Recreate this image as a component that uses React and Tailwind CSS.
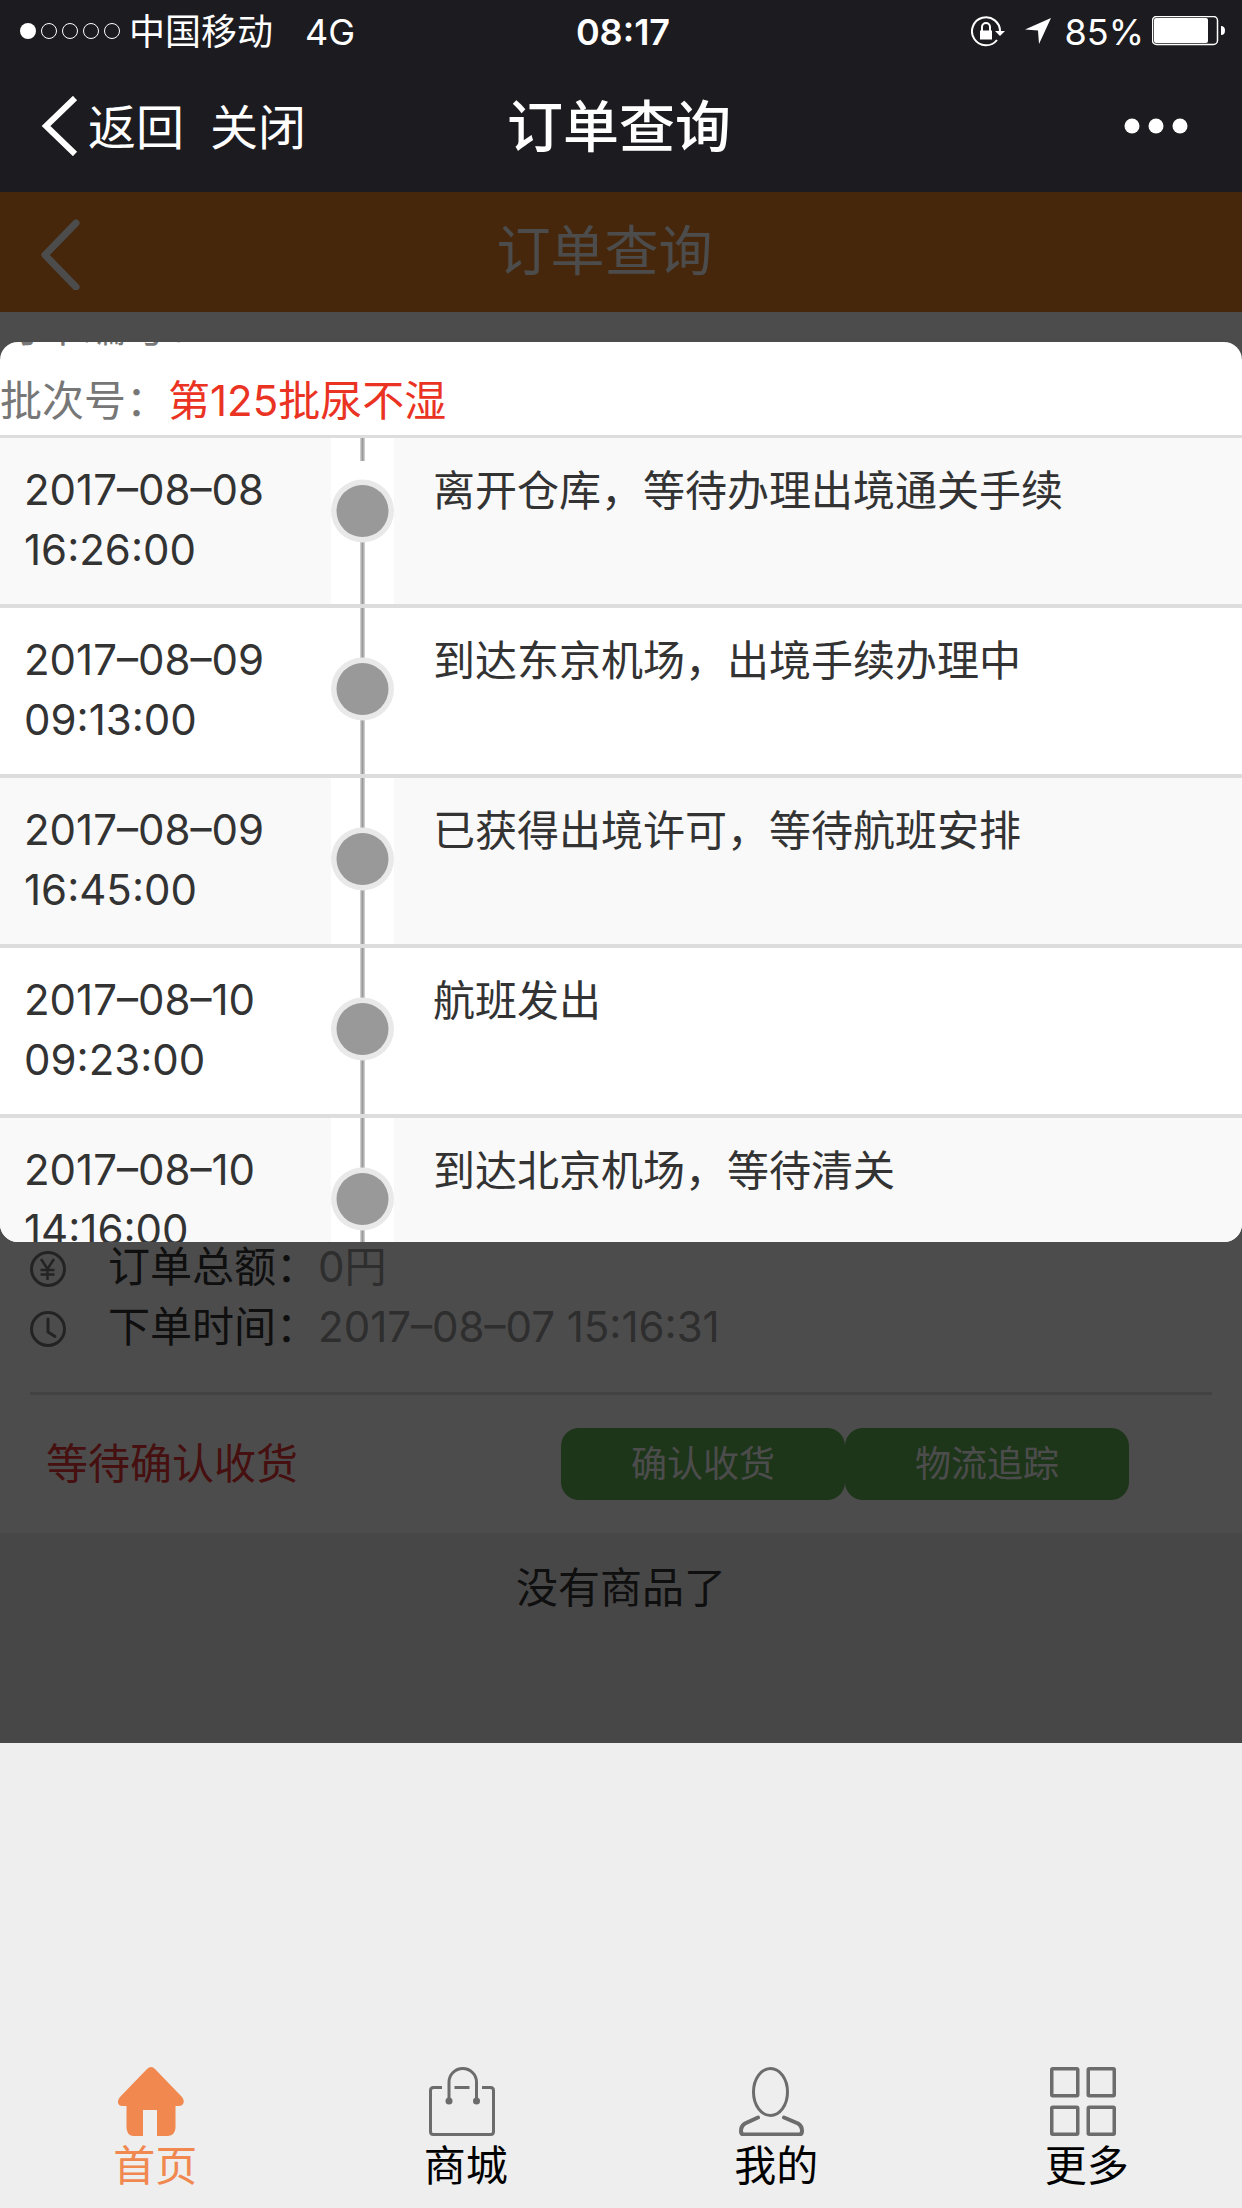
import React from 'react';

const FONT = "font-['Inter','Noto_Sans_CJK_SC',sans-serif]";

const records = [
  { date: '2017–08–08', time: '16:26:00', text: '离开仓库，等待办理出境通关手续' },
  { date: '2017–08–09', time: '09:13:00', text: '到达东京机场，出境手续办理中' },
  { date: '2017–08–09', time: '16:45:00', text: '已获得出境许可，等待航班安排' },
  { date: '2017–08–10', time: '09:23:00', text: '航班发出' },
  { date: '2017–08–10', time: '14:16:00', text: '到达北京机场，等待清关' }
];

const HomeIcon = () => (
  <svg className="w-[66px] h-[69px]" viewBox="0 0 66 69" fill="currentColor">
    <path d="M29 2Q33-2 37 2L64 30Q67 34 65 37Q64 39 61 39H57.500V61Q57 68 50 69H39V43H25V69H15Q9 68 8.500 61V39H4Q1 39 0 36Q-.5 33 2 30Z" />
  </svg>
);

const BagIcon = () => (
  <svg className="w-[66px] h-[69px]" viewBox="0 0 66 69" fill="none" stroke="currentColor" strokeWidth="3">
    <path d="M13 20.500H4.500Q1.500 20.500 1.500 23.500V64.500Q1.500 67.500 4.500 67.500H61.500Q64.500 67.500 64.500 64.500V23.500Q64.500 20.500 61.500 20.500H53M25.500 20.500H40.500" />
    <path d="M20 33V15A13.750 13.500 0 0 1 47.500 15V33" />
    <circle cx="20" cy="34" r="3.500" fill="currentColor" stroke="none" />
    <circle cx="47.500" cy="34" r="3.500" fill="currentColor" stroke="none" />
  </svg>
);

const UserIcon = () => (
  <svg className="w-[66px] h-[69px]" viewBox="0 0 66 69" fill="none" stroke="currentColor" strokeWidth="3" strokeLinecap="round">
    <ellipse cx="31.500" cy="25" rx="17" ry="23.500" />
    <path d="M19 50.500L6 56.500Q2 59 2 64Q2 67.500 5 67.500H60Q63 67.500 63 64Q63 59 59 56.500L45 50.500" strokeWidth="4" />
  </svg>
);

const GridIcon = () => (
  <svg className="w-[66px] h-[69px]" viewBox="0 0 66 69" fill="none" stroke="currentColor" strokeWidth="3.500">
    <rect x="1.750" y="1.750" width="26" height="27" rx="1" />
    <rect x="38.250" y="1.750" width="26" height="27" rx="1" />
    <rect x="1.750" y="40.250" width="26" height="27" rx="1" />
    <rect x="38.250" y="40.250" width="26" height="27" rx="1" />
  </svg>
);

const tabs = [
  { name: '首页', icon: HomeIcon, active: true },
  { name: '商城', icon: BagIcon },
  { name: '我的', icon: UserIcon },
  { name: '更多', icon: GridIcon }
];

const StatusBar = () => (
  <div className="grid grid-cols-[1fr_auto_1fr] items-center h-[60px] pl-5 pr-4 text-[36px] leading-[60px]">
    <div className="flex items-center">
      <svg className="w-[101px] h-[18px]" viewBox="0 0 101 18" fill="none" stroke="white">
        <circle cx="8" cy="9" r="8" fill="white" stroke="none" />
        <circle cx="29" cy="9" r="7.500" />
        <circle cx="50" cy="9" r="7.500" />
        <circle cx="71" cy="9" r="7.500" />
        <circle cx="92" cy="9" r="7.500" />
      </svg>
      <span className="pt-[2px] ml-2">中国移动</span>
      <span className="pt-[2px] ml-8">4G</span>
    </div>
    <span className="pt-[2px] font-semibold">08:17</span>
    <div className="flex items-center justify-end">
      <svg className="w-[35px] h-[31px]" viewBox="0 0 35 31" fill="none" stroke="white" strokeWidth="2">
        <path d="M29 16A14 14 0 1 0 26 24" />
        <path d="M24 15H34L29 20Z" fill="white" stroke="none" />
        <rect x="9" y="14.500" width="12" height="9" fill="white" stroke="none" />
        <path d="M11 15V11A4 4 0 0 1 19 11V15" />
      </svg>
      <svg className="w-[28px] h-[28px] ml-[18px]" viewBox="0 0 28 28" fill="white">
        <path d="M27 1L1 12.500L14 13.500L15 27Z" />
      </svg>
      <span className="pt-[2px] ml-3 mr-2">85%</span>
      <svg className="w-[74px] h-[30px]" viewBox="0 0 74 30" fill="none" stroke="white">
        <rect x=".5" y=".5" width="65" height="28" rx="4" strokeWidth="1.500" />
        <rect x="2" y="2" width="54" height="25" rx="2" fill="white" stroke="none" />
        <path d="M69 10Q73 10 73 14.500Q73 19 69 19Z" fill="white" stroke="none" />
      </svg>
    </div>
  </div>
);

const TimelineNode = ({ first }) => (
  <svg className="block w-[63px] h-[166px]" viewBox="0 0 63 166">
    <path d={first ? 'M31.500 0V23M31.500 73V166' : 'M31.500 0V166'} stroke="#ccc" strokeWidth="5" />
    <path d={first ? 'M31.500 0V23M31.500 73V166' : 'M31.500 0V166'} stroke="#999" strokeWidth="2" />
    <circle cx="31.500" cy={first ? 73 : 81} r="31.500" fill="#e9e9e9" />
    <circle cx="31.500" cy={first ? 73 : 81} r="26" fill="#999" />
  </svg>
);

const TrackingDialog = () => (
  <section role="dialog" aria-label="物流追踪" className="absolute inset-x-0 top-[150px] h-[900px] overflow-hidden rounded-[18px] bg-white text-[42px] leading-[60px]">
    <div className="flex flex-col justify-end gap-[14px] h-[96px] pb-1 border-b-[3px] border-[#ddd] text-[#777]">
      <p>订单编号：201708071516318056</p>
      <p>批次号：<span className="text-[#ea3323]">第125批尿不湿</span></p>
    </div>
    <table className="w-full table-fixed border-separate border-spacing-0 text-[#333]">
      <tbody>
        {records.map((r, i) => (
          <tr key={i} className="odd:bg-[#f9f9f9] align-top">
            <td className="w-[331px] pl-6 pt-[22px] border-b-4 border-[#ddd]">
              <div>{r.date}</div>
              <div>{r.time}</div>
            </td>
            <td className="w-[63px] p-0 bg-white border-b-4 border-[#ddd]"><TimelineNode first={i === 0} /></td>
            <td className="pl-[39px] pt-[23px] border-b-4 border-[#ddd]">{r.text}</td>
          </tr>
        ))}
      </tbody>
    </table>
  </section>
);

const OrderPage = () => (
  <div className="relative bg-[#eee] text-[42px] leading-[60px] text-[#333]">
    <header className="flex items-center h-[120px] pl-10 pr-[114px] bg-[#e98228] text-white">
      <button aria-label="返回" className="pt-1">
        <svg className="w-[41px] h-[72px]" viewBox="0 0 41 72" fill="none" stroke="currentColor" strokeWidth="7" strokeLinecap="round" strokeLinejoin="round">
          <path d="M36 5L5 37L36 69" />
        </svg>
      </button>
      <h2 className="flex-1 text-center text-[54px]">订单查询</h2>
    </header>

    <div className="bg-white px-[30px] pt-[925px]">
      <div className="flex items-center">
        <svg className="w-9 h-10 pt-1 text-[#777]" viewBox="0 0 36 36" fill="none" stroke="currentColor" strokeWidth="3">
          <circle cx="18" cy="18" r="16.500" />
          <path d="M11 8L17.500 18L24 8M17.500 18V29M10.500 19H24.500M10.500 23.500H24.500" strokeWidth="2.500" />
        </svg>
        <span className="ml-[42px]">订单总额：</span>
        <span className="text-[#999]">0円</span>
      </div>
      <div className="flex items-center">
        <svg className="w-9 h-10 pt-1 text-[#777]" viewBox="0 0 36 36" fill="none" stroke="currentColor" strokeWidth="3">
          <circle cx="18" cy="18" r="16.500" />
          <path d="M18 8V21L25 25.500" strokeLinecap="round" strokeLinejoin="round" />
        </svg>
        <span className="ml-[42px]">下单时间：</span>
        <span className="text-[#999]">2017–08–07 15:16:31</span>
      </div>
      <div className="flex items-center justify-between mt-[35px] py-[33px] pl-4 pr-[83px] border-t-[3px] border-[#ddd]">
        <span className="text-[#e93836]">等待确认收货</span>
        <div className="flex text-[36px] leading-[72px] text-white">
          <button className="w-[284px] h-[72px] rounded-[18px] bg-[#61b153]">确认收货</button>
          <button className="w-[284px] h-[72px] rounded-[18px] bg-[#61b153]">物流追踪</button>
        </div>
      </div>
    </div>

    <p className="pt-[25px] pb-[125px] text-center">没有商品了</p>

    {/* Backdrop and dialog */}
    <div className="absolute inset-0 bg-black/70" />
    <TrackingDialog />
  </div>
);

const App = () => (
  <div className={`min-h-screen flex flex-col bg-[#eee] ${FONT}`}>
    <div className="bg-[#1c1b1f] text-white">
      <StatusBar />
      <nav className="grid grid-cols-[1fr_auto_1fr] items-center h-[132px] pl-[50px] pr-[54px]">
        <div className="flex items-center -ml-[10px] text-[48px] leading-[60px]">
          <button className="flex items-center gap-2">
            <svg className="w-10 h-[60px]" viewBox="0 0 40 60" fill="none" stroke="currentColor" strokeWidth="6">
              <path d="M35 2L6 30L35 58" />
            </svg>
            <span className="pt-1">返回</span>
          </button>
          <button className="pt-1 ml-[26px]">关闭</button>
        </div>
        <h1 className="pt-[2px] text-[56px] leading-[60px] font-medium">订单查询</h1>
        <button className="justify-self-end" aria-label="更多">
          <svg className="w-16 h-4" viewBox="0 0 64 16" fill="currentColor">
            <circle cx="8" cy="8" r="7.500" />
            <circle cx="32" cy="8" r="7.500" />
            <circle cx="56" cy="8" r="7.500" />
          </svg>
        </button>
      </nav>
    </div>

    <OrderPage />

    <footer className="grid grid-cols-4 mt-auto pb-3 text-[42px] leading-[60px]">
      {tabs.map((tab) => {
        const Icon = tab.icon;
        return (
          <a key={tab.name} href="#" className={`flex flex-col items-center ${tab.active ? 'text-[#f08850]' : 'text-black'}`}>
            <span className={`mr-2 ${tab.active ? '' : 'text-[#6c6c6c]'}`}><Icon /></span>
            {tab.name}
          </a>
        );
      })}
    </footer>
  </div>
);

export default App;
